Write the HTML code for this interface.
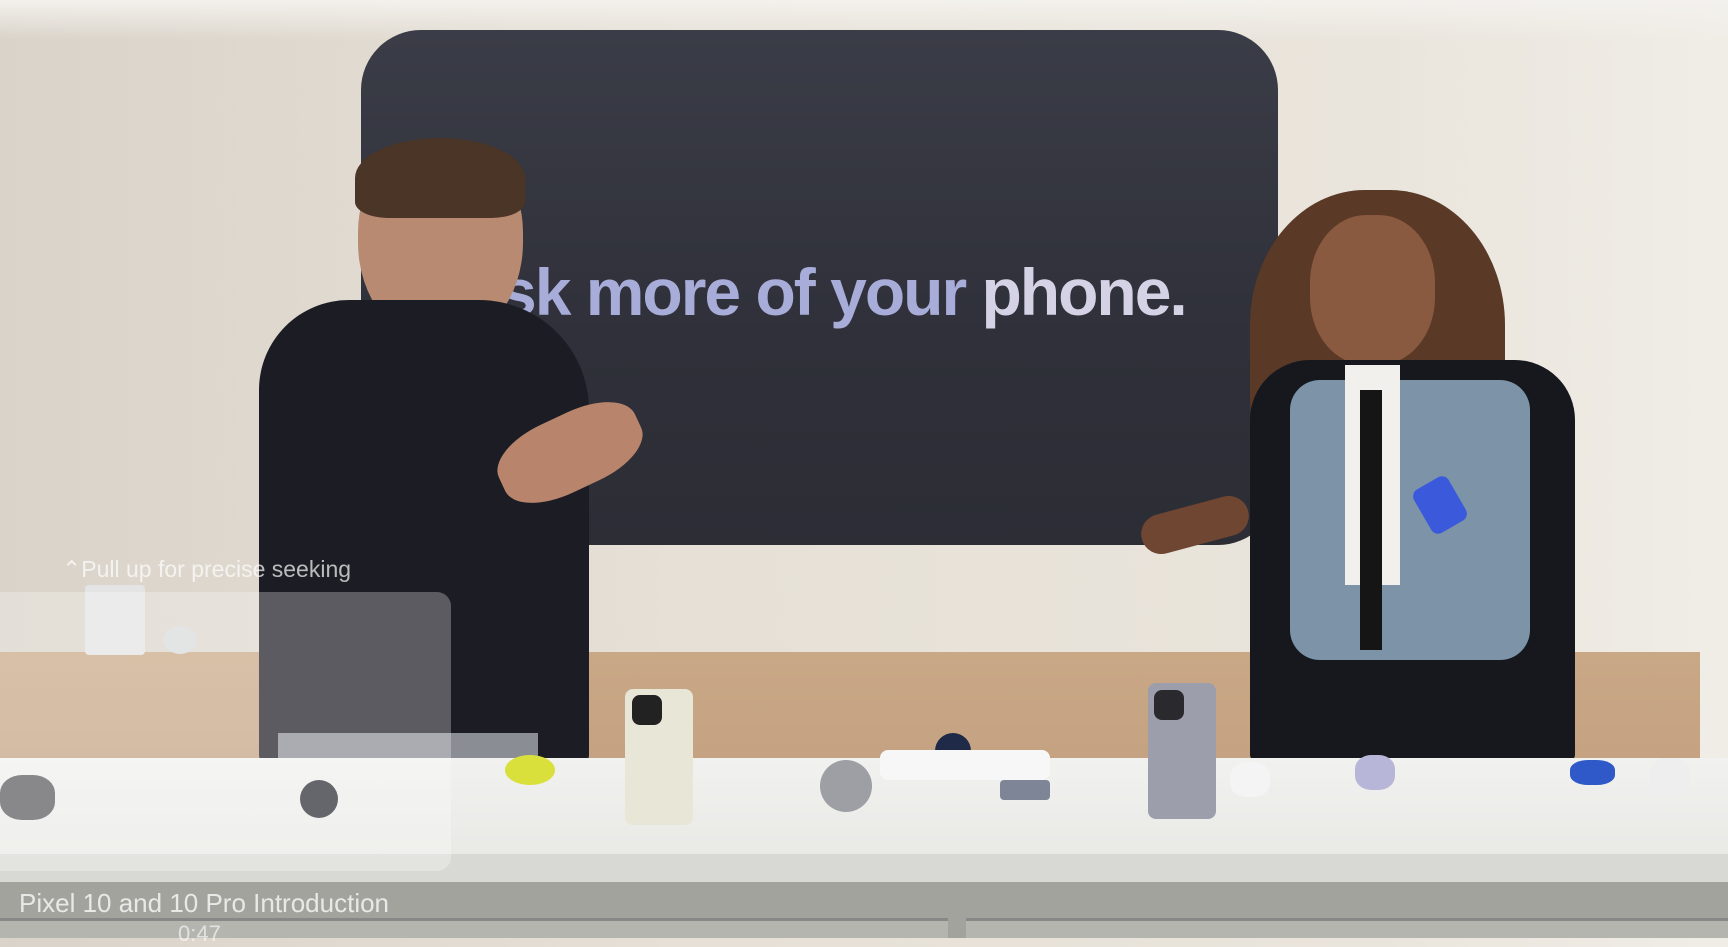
<!DOCTYPE html>
<html><head><meta charset="utf-8"><style>
*{margin:0;padding:0;box-sizing:border-box}
body{width:1728px;height:938px;overflow:hidden;position:relative;font-family:"Liberation Sans",sans-serif;background:linear-gradient(90deg,#d9d3c9 0%,#e6e0d6 40%,#eae5dc 80%,#f0ede7 100%)}
.a{position:absolute}
</style></head><body>
<div class="a" style="left:0;top:0;width:1728px;height:40px;background:linear-gradient(#f3f1ed,rgba(0,0,0,0))"></div>
<div class="a" style="left:361px;top:30px;width:917px;height:515px;background:linear-gradient(180deg,#3a3c47,#2f3039 60%,#2c2d35);border-radius:60px"></div>
<div class="a" style="left:500px;top:254px;font-size:66px;font-weight:bold;color:#a8acd8;letter-spacing:-2px;white-space:nowrap">sk more of your <span style="color:#d4d2e4">phone.</span></div>
<!-- shelf -->
<div class="a" style="left:0;top:652px;width:1700px;height:110px;background:linear-gradient(#c9a886,#c4a282)"></div>
<div class="a" style="left:85px;top:585px;width:60px;height:70px;background:#e4e4e4;border-radius:4px"></div>
<div class="a" style="left:163px;top:626px;width:34px;height:28px;background:#d8dcdc;border-radius:50%"></div>
<!-- man -->
<div class="a" style="left:358px;top:140px;width:165px;height:205px;background:#b88a72;border-radius:45% 45% 50% 50%"></div>
<div class="a" style="left:355px;top:138px;width:170px;height:80px;background:#4a3526;border-radius:50% 50% 20% 20%"></div>
<div class="a" style="left:259px;top:300px;width:330px;height:465px;background:#1c1d24;border-radius:90px 110px 10px 10px"></div>
<div class="a" style="left:495px;top:415px;width:150px;height:75px;background:#b8856c;border-radius:40%;transform:rotate(-25deg)"></div>
<div class="a" style="left:278px;top:733px;width:260px;height:30px;background:#8a8d93"></div>
<!-- woman -->
<div class="a" style="left:1250px;top:190px;width:255px;height:300px;background:#5a3a26;border-radius:45% 45% 30% 30%"></div>
<div class="a" style="left:1310px;top:215px;width:125px;height:150px;background:#8a5a40;border-radius:45%"></div>
<div class="a" style="left:1250px;top:360px;width:325px;height:400px;background:#17181d;border-radius:60px 60px 5px 5px"></div>
<div class="a" style="left:1290px;top:380px;width:240px;height:280px;background:#7d93a8;border-radius:30px"></div>
<div class="a" style="left:1345px;top:365px;width:55px;height:220px;background:#f2f0ec"></div>
<div class="a" style="left:1360px;top:390px;width:22px;height:260px;background:#151515"></div>
<div class="a" style="left:1140px;top:505px;width:110px;height:40px;background:#6e4632;border-radius:20px;transform:rotate(-15deg)"></div>
<div class="a" style="left:1420px;top:480px;width:40px;height:50px;background:#3a5adb;border-radius:8px;transform:rotate(-30deg)"></div>
<!-- table -->
<div class="a" style="left:0;top:758px;width:1728px;height:98px;background:linear-gradient(#f1f1ef,#e9e9e6)"></div>
<div class="a" style="left:0;top:854px;width:1728px;height:30px;background:#d8d8d4"></div>
<div class="a" style="left:0;top:882px;width:1728px;height:56px;background:#a3a39e"></div>
<div class="a" style="left:0;top:918px;width:948px;height:20px;background:#b5b5b0;border-top:3px solid #888"></div>
<div class="a" style="left:966px;top:918px;width:762px;height:20px;background:#b5b5b0;border-top:3px solid #888"></div>
<!-- products -->
<div class="a" style="left:625px;top:689px;width:68px;height:136px;background:#e8e6d6;border-radius:8px"></div>
<div class="a" style="left:632px;top:695px;width:30px;height:30px;background:#222;border-radius:8px"></div>
<div class="a" style="left:1148px;top:683px;width:68px;height:136px;background:#9c9eab;border-radius:8px"></div>
<div class="a" style="left:1154px;top:690px;width:30px;height:30px;background:#2a2a2e;border-radius:8px"></div>
<div class="a" style="left:820px;top:760px;width:52px;height:52px;background:#9d9fa4;border-radius:50%"></div>
<div class="a" style="left:935px;top:733px;width:36px;height:36px;background:#1e2a48;border-radius:50%"></div>
<div class="a" style="left:505px;top:755px;width:50px;height:30px;background:#d9e03c;border-radius:50%"></div>
<div class="a" style="left:0;top:775px;width:55px;height:45px;background:#5a5a5e;border-radius:40%"></div>
<div class="a" style="left:300px;top:780px;width:38px;height:38px;background:#2a2c34;border-radius:50%"></div>
<div class="a" style="left:1355px;top:755px;width:40px;height:35px;background:#b8b6d8;border-radius:40%"></div>
<div class="a" style="left:1570px;top:760px;width:45px;height:25px;background:#2f58c8;border-radius:40%"></div>
<div class="a" style="left:1650px;top:758px;width:40px;height:40px;background:#eee;border-radius:40%"></div>
<div class="a" style="left:1000px;top:780px;width:50px;height:20px;background:#7d8596;border-radius:4px"></div>
<div class="a" style="left:880px;top:750px;width:170px;height:30px;background:#f7f7f7;border-radius:8px"></div>
<div class="a" style="left:1230px;top:762px;width:40px;height:35px;background:#f4f4f4;border-radius:40%"></div>
<!-- overlay -->
<div class="a" style="left:0;top:592px;width:451px;height:279px;background:rgba(255,255,255,0.28);border-radius:0 14px 14px 0"></div>
<div class="a" style="left:62px;top:556px;font-size:23px;color:rgba(255,255,255,0.7);white-space:nowrap">⌃Pull up for precise seeking</div>
<div class="a" style="left:19px;top:888px;font-size:26px;color:rgba(255,255,255,0.75);white-space:nowrap">Pixel 10 and 10 Pro Introduction</div>
<div class="a" style="left:178px;top:921px;font-size:22px;color:rgba(255,255,255,0.6)">0:47</div>
</body></html>
